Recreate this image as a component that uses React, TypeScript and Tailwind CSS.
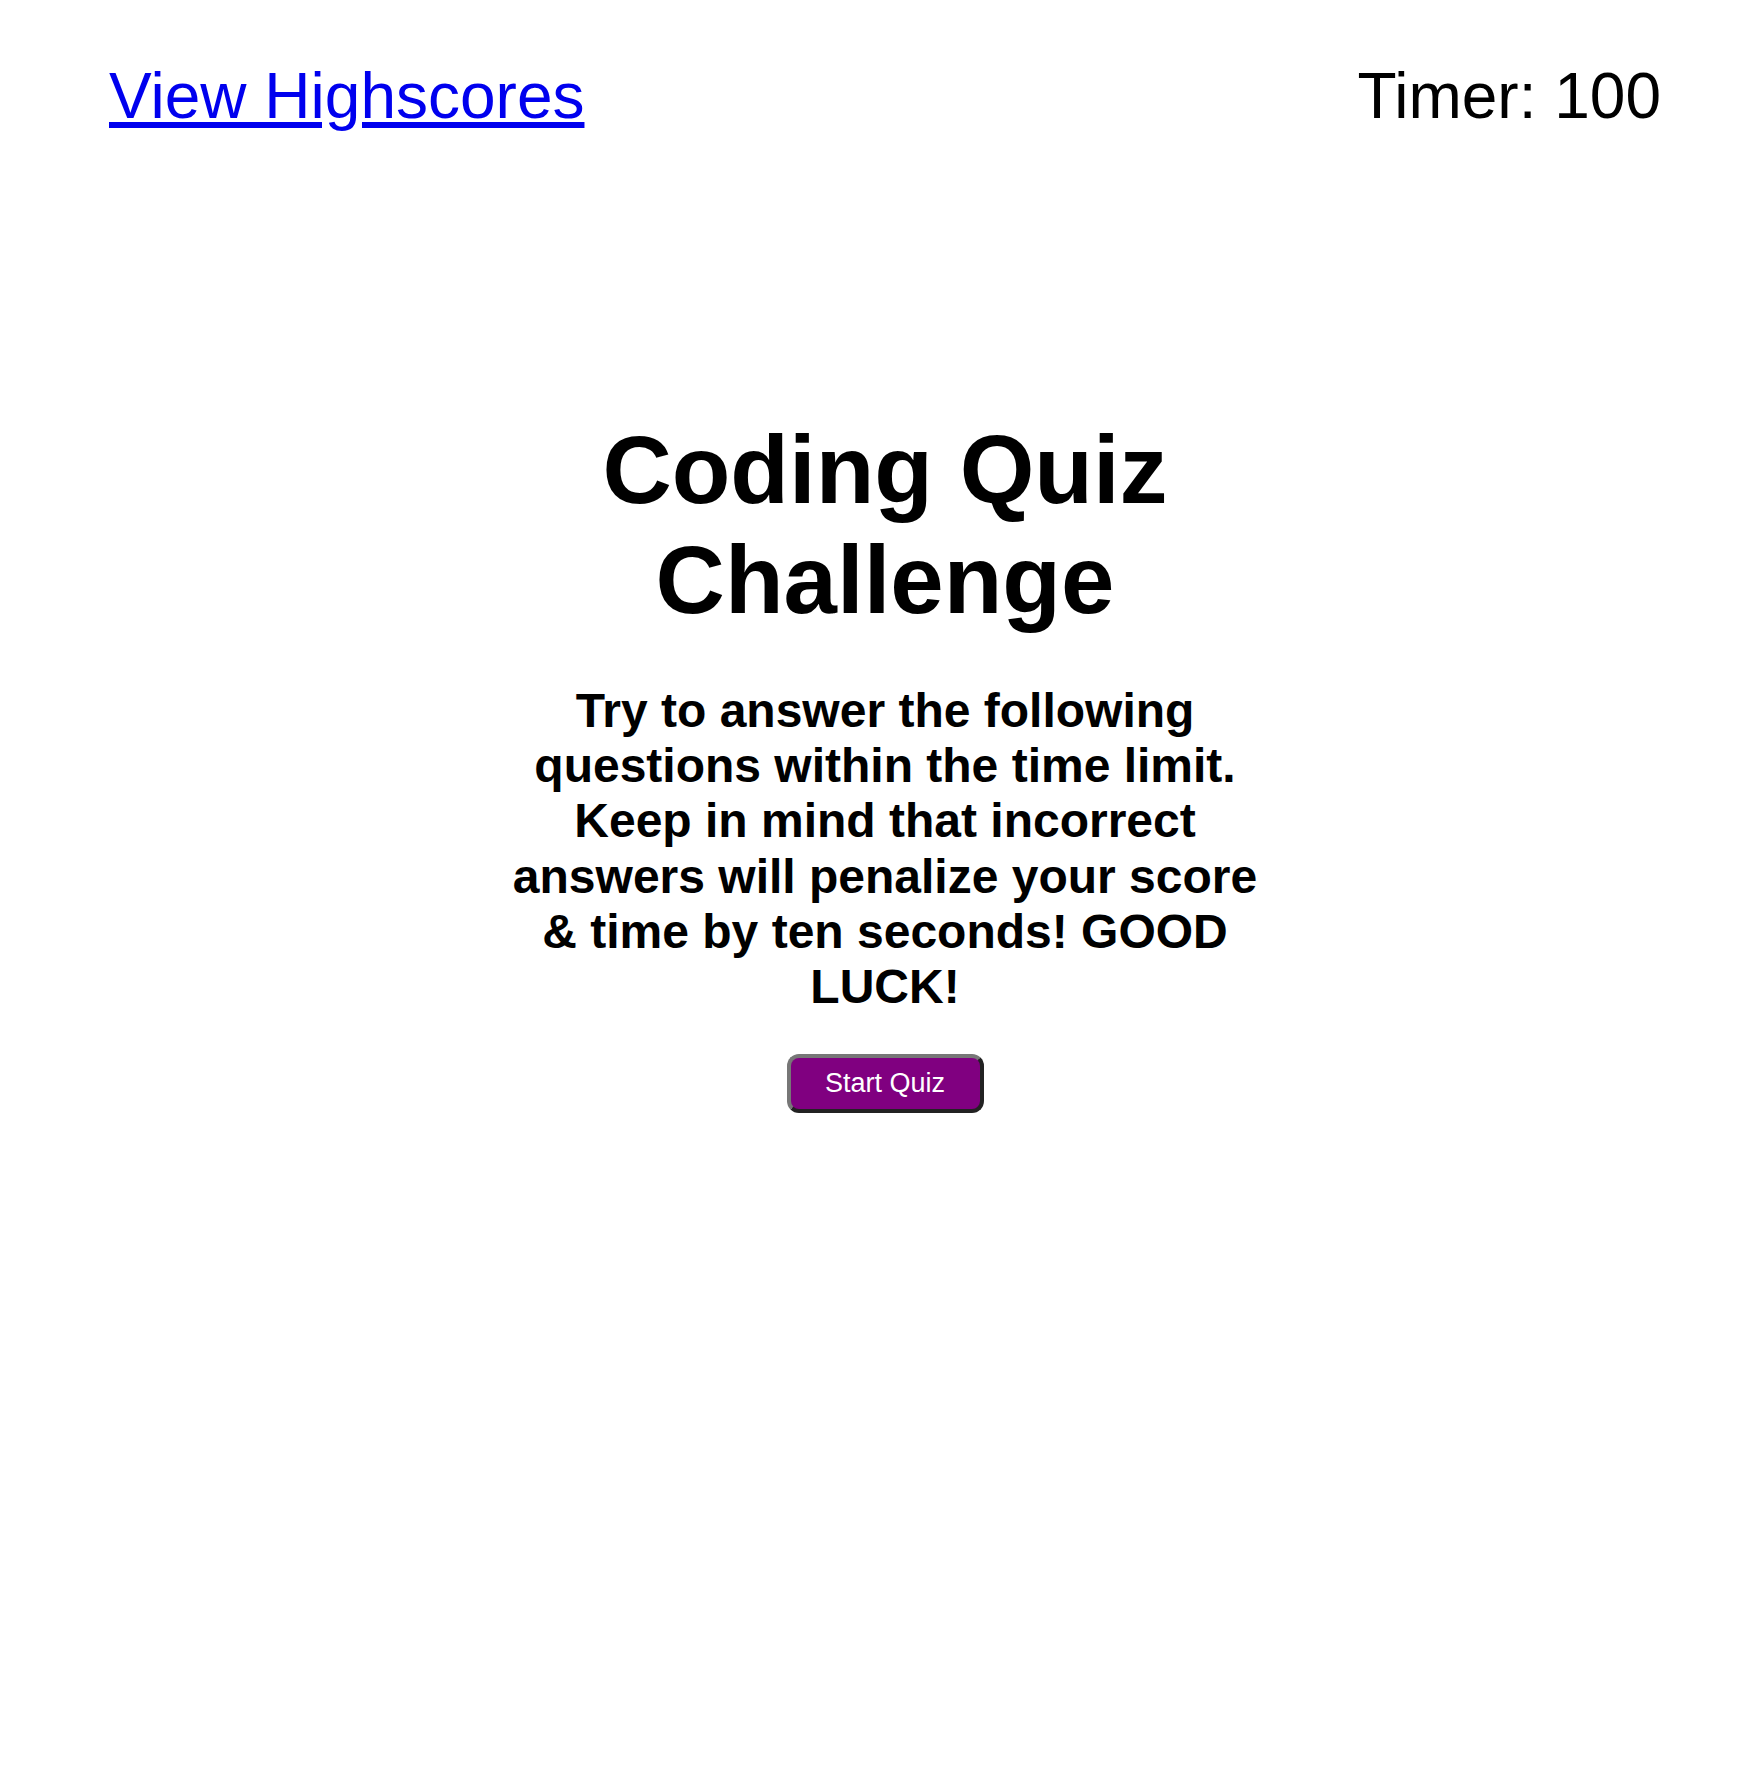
export default function App() {
  return (
    <div
      className="min-h-[1782px] w-full bg-white text-black"
      style={{ fontFamily: '"Liberation Sans", Arial, sans-serif' }}
    >
      <div className="pl-[109px] pr-[79px] pt-[60px]">
        <header className="flex items-start justify-between text-[64px] leading-[1.149]">
          <a href="#" className="text-[#0000ee] underline">
            View Highscores
          </a>
          <div>Timer: 100</div>
        </header>

        <main className="mt-[281px] flex flex-col items-center text-center">
          <h1 className="text-[96px] font-bold leading-[1.149]">
            Coding Quiz
            <br />
            Challenge
          </h1>
          <p className="mt-[48px] max-w-[780px] text-[48px] font-bold leading-[1.149]">
            Try to answer the following questions within the time limit. Keep in mind that incorrect
            answers will penalize your score &amp; time by ten seconds! GOOD LUCK!
          </p>
          <button
            type="button"
            className="mt-[40px] flex h-[59px] w-[197px] items-center justify-center rounded-[12px] border-4 border-t-[#777777] border-l-[#777777] border-r-[#222222] border-b-[#222222] bg-[#800080] text-[27px] leading-[1.149] text-white"
          >
            Start Quiz
          </button>
        </main>
      </div>
    </div>
  );
}
